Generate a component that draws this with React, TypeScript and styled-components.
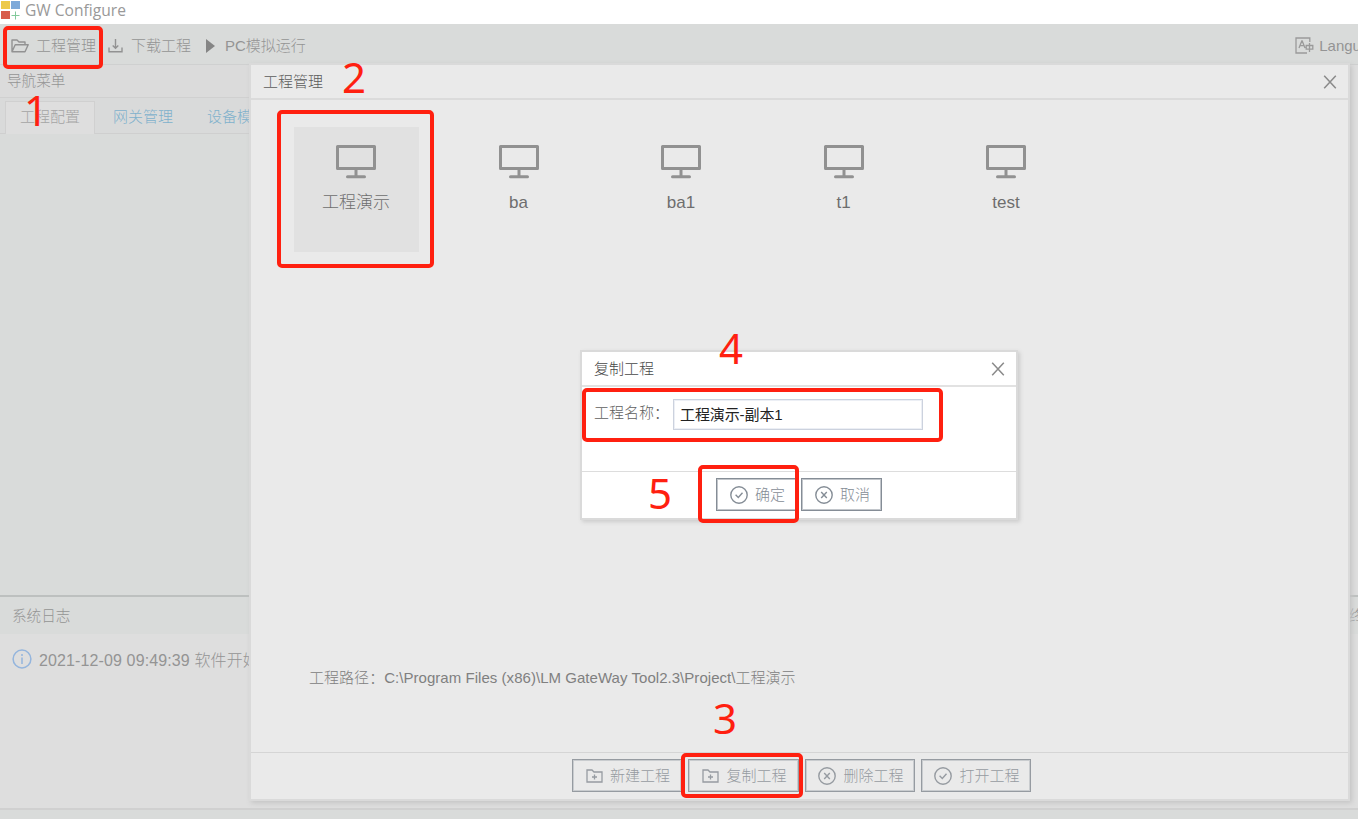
import React from 'react';
import styled, { createGlobalStyle } from 'styled-components';

const Global = createGlobalStyle`
  * { box-sizing: border-box; }
  body { margin: 0; overflow: hidden; background: #dedede; }
  body, button, input { font-family: "Liberation Sans", "Noto Sans CJK SC", sans-serif; font-weight: 300; }
`;

const Window = styled.div`
  position: relative;
  width: 1358px;
  height: 819px;
  overflow: hidden;
  display: flex;
  flex-direction: column;
  background: #dedede;
  font-size: 15px;
  line-height: 20px;
  color: #949494;
  white-space: nowrap;
`;

const TitleBar = styled.header`
  height: 24px;
  flex: none;
  display: flex;
  align-items: center;
  gap: 5px;
  padding: 0 0 4px 1px;
  background: #fff;
  color: #999;
  font: 400 15.6px/20px "Open Sans", sans-serif;
`;

const Toolbar = styled.nav`
  height: 41px;
  flex: none;
  display: flex;
  align-items: center;
  padding: 3px 0 0 11px;
  background: #d9dbda;
  border-bottom: 1px solid #cfd0d0;
`;

const ToolItem = styled.div<{ $gap: number; $after?: number }>`
  display: flex;
  align-items: center;
  gap: ${p => p.$gap}px;
  margin-right: ${p => p.$after ?? 0}px;
  svg { flex: none; }
`;

const Spacer = styled.div`flex: 1;`;

const Workspace = styled.main`
  height: 530px;
  flex: none;
  display: flex;
`;

const Sidebar = styled.aside`
  width: 300px;
  display: flex;
  flex-direction: column;
  background: #d9dbda;
`;

const SideHeading = styled.div`
  height: 33px;
  padding: 6px 7px;
  font-size: 14.6px;
  background: #dbdbdb;
  border-bottom: 1px solid #d0d0d0;
`;

const Tabs = styled.div`
  height: 36px;
  display: flex;
  padding: 3px 0 0 5px;
  background: #d9dada;
  border-bottom: 1px solid #cfcfcf;
`;

const Tab = styled.div<{ $active?: boolean }>`
  height: ${p => (p.$active ? 33 : 32)}px;
  padding: 5px ${p => (p.$active ? 14 : 15)}px 0 ${p => (p.$active ? 14 : 17)}px;
  color: ${p => (p.$active ? '#a5a5a5' : '#7fb1cc')};
  background: ${p => (p.$active ? '#dedede' : 'transparent')};
  border: 1px solid ${p => (p.$active ? '#d0d0d0' : 'transparent')};
  border-bottom: 0;
`;

const LogPanel = styled.section`
  height: 213px;
  flex: none;
  border-top: 2px solid #bdc0bf;
`;

const LogHeading = styled.div`
  height: 37px;
  display: flex;
  justify-content: space-between;
  padding: 9px 0 0 12px;
  font-size: 14.6px;
  background: #d9dbda;
`;

const SideLabel = styled.span`
  width: 9px;
  overflow: hidden;
`;

const LogLine = styled.div`
  display: flex;
  align-items: center;
  gap: 7px;
  padding: 13px 0 0 12px;
  font-size: 16px;
  letter-spacing: 0.12px;
  span { padding-top: 4px; }
`;

const StatusBar = styled.footer`
  height: 11px;
  border-top: 2px solid #d0d0d0;
  background: #d9dbda;
`;

const Dialog = styled.section`
  position: absolute;
  left: 249px;
  top: 63px;
  width: 1101px;
  height: 738px;
  display: flex;
  flex-direction: column;
  background: #eaeaea;
  border: 2px solid #dadada;
  box-shadow: 2px 2px 5px #c4c4c4;
`;

const DialogHeader = styled.header<{ $line: string; $ink: string }>`
  height: 35px;
  flex: none;
  display: flex;
  align-items: center;
  justify-content: space-between;
  padding: 0 11px 0 12px;
  color: ${p => p.$ink};
  border-bottom: 2px solid ${p => p.$line};
`;

const DialogBody = styled.div`
  flex: 1;
  display: flex;
  flex-direction: column;
  justify-content: space-between;
  padding: 27px 0 64px 43px;
`;

const Projects = styled.div`
  display: flex;
  gap: 37.5px;
`;

const Project = styled.div<{ $selected?: boolean }>`
  width: 125px;
  height: 125px;
  display: flex;
  flex-direction: column;
  align-items: center;
  gap: 14px;
  padding: 18px 1px 0 0;
  font-size: 17px;
  color: #6e6e6e;
  background: ${p => (p.$selected ? '#e1e1e1' : 'transparent')};
`;

const PathText = styled.div`
  padding-left: 15px;
  color: #808080;
  font-size: 15px;
  letter-spacing: 0.04px;
`;

const DialogFooter = styled.footer`
  height: 47px;
  display: flex;
  gap: 6px;
  padding: 6px 0 0 321px;
  border-top: 1px solid #d5d5d5;
`;

const ActionButton = styled.button<{ $width: number; $tone: string; $edge: string }>`
  width: ${p => p.$width}px;
  height: 33px;
  flex: none;
  display: flex;
  align-items: center;
  justify-content: center;
  gap: 7px;
  padding: 1px 0 0 2px;
  background: transparent;
  border: 1px solid ${p => p.$tone};
  box-shadow: inset 0 0 0 1px ${p => p.$edge};
  border-radius: 0;
  color: ${p => p.$tone};
  font-size: 15px;
  line-height: 20px;
  white-space: nowrap;
`;

const CopyDialog = styled.section`
  position: absolute;
  left: 580px;
  top: 350px;
  width: 438px;
  height: 170px;
  display: flex;
  flex-direction: column;
  background: #fff;
  border: 2px solid #dadada;
  box-shadow: 2px 2px 4px #ccc;
`;

const Field = styled.label`
  flex: 1;
  display: flex;
  align-items: flex-start;
  gap: 3px;
  padding: 12px 0 0 12px;
  color: #606060;
  span { width: 76px; padding-top: 4px; }
`;

const NameInput = styled.input`
  width: 250px;
  height: 31px;
  padding: 0 6px 3px;
  border: 1px solid #ccd2de;
  box-shadow: inset 0 0 0 1px #eceff5;
  outline: 0;
  font-size: 15px;
  letter-spacing: -0.1px;
  font-weight: 400;
  color: #222;
  background: #fff;
`;

const CopyFooter = styled.footer`
  height: 47px;
  display: flex;
  gap: 4px;
  padding: 6px 0 0 134px;
  border-top: 1px solid #ddd;
`;

const Highlight = styled.div<{ $x: number; $y: number; $w: number; $h: number }>`
  position: absolute;
  left: ${p => p.$x}px;
  top: ${p => p.$y}px;
  width: ${p => p.$w}px;
  height: ${p => p.$h}px;
  border: 4px solid #ff2010;
  border-radius: 5px;
  pointer-events: none;
`;

const Step = styled.div<{ $x: number; $y: number }>`
  position: absolute;
  left: ${p => p.$x}px;
  top: ${p => p.$y}px;
  color: #ff2010;
  font: 400 42px/42px "Noto Sans", sans-serif;
`;

const Logo = () => (
  <svg width="19" height="20" viewBox="0 0 19 20">
    <path fill="#edc94a" d="M0 1h9v8H0z" />
    <path fill="#7da9d9" d="M10 1h9v8h-9z" />
    <path fill="#d85c4b" d="M0 11h9v8H0z" />
    <path stroke="#82c99a" d="M10.5 15.5h8M14.5 11.5v8" />
  </svg>
);

const FolderOpen = () => (
  <svg width="18" height="14" viewBox="0 0 18 14" fill="none" stroke="#929292" strokeWidth="1.4" strokeLinejoin="round">
    <path d="M1 12.7V1h5l2 2h6v2.6M1 12.7 4.2 5.7h13L14 12.7z" />
  </svg>
);

const Download = () => (
  <svg width="15" height="15" viewBox="0 0 15 15" fill="none" stroke="#929292" strokeWidth="1.4">
    <path d="M1 9.5v4.3h13V9.5M7.5 1v9M4.7 7.5l2.8 2.8 2.8-2.8" />
  </svg>
);

const Play = () => (
  <svg width="9" height="14" viewBox="0 0 9 14"><path d="M0 0l9 7-9 7z" fill="#858585" /></svg>
);

const Language = () => (
  <svg width="19" height="17" viewBox="0 0 19 17" fill="none" stroke="#9a9a9a" strokeWidth="1.3">
    <path d="M14.8 5V1H1v15h11M4 11l2.8-7h.4L10 11M5 8.7h4M11.2 8.5h6.6v3.6h-6.6zM14.5 6v9" />
  </svg>
);

const Close = () => (
  <svg width="14" height="14" viewBox="0 0 14 14" fill="none" stroke="#8a8a8a" strokeWidth="1.5">
    <path d="M1.2.7l11.6 12.6M12.8.7L1.2 13.3" />
  </svg>
);

const Monitor = () => (
  <svg width="40" height="34" viewBox="0 0 40 34" fill="none" stroke="#919191" strokeWidth="3" strokeLinejoin="round" strokeLinecap="round">
    <path d="M1.5 1.5h37v22h-37zM20 24v7M11.5 31.8h17" />
  </svg>
);

const Info = () => (
  <svg width="20" height="20" viewBox="0 0 20 20" fill="none" stroke="#94b5dd" strokeWidth="1.5">
    <circle cx="10" cy="10" r="8.9" /><path d="M10 8.5V15M10 5v2" />
  </svg>
);

const FolderAdd = () => (
  <svg width="17" height="14" viewBox="0 0 17 14" fill="none" stroke="currentColor" strokeWidth="1.3">
    <path d="M1 1h5l2 2h8v10H1zM6 8h5M8.5 5.5v5" />
  </svg>
);

const Circled = ({ cross }: { cross?: boolean }) => (
  <svg width="18" height="18" viewBox="0 0 18 18" fill="none" stroke="currentColor" strokeWidth="1.4">
    <circle cx="9" cy="9" r="8.2" />
    <path d={cross ? 'M6.2 6l5.6 6M11.8 6l-5.6 6' : 'M5.6 8.8l2.7 2.7 4.2-4.8'} />
  </svg>
);

const projects = ['工程演示', 'ba', 'ba1', 't1', 'test'];
const muted = { $tone: '#969ba1', $edge: '#c9cccf' };
const strong = { $tone: '#858d96', $edge: '#c2c6cb' };

export default function App() {
  return (
    <Window>
      <Global />
      <TitleBar><Logo />GW Configure</TitleBar>
      <Toolbar>
        <ToolItem $gap={7} $after={12}><FolderOpen />工程管理</ToolItem>
        <ToolItem $gap={8} $after={15}><Download />下载工程</ToolItem>
        <ToolItem $gap={10}><Play />PC模拟运行</ToolItem>
        <Spacer />
        <ToolItem $gap={5} $after={-28}><Language />Language</ToolItem>
      </Toolbar>
      <Workspace>
        <Sidebar>
          <SideHeading>导航菜单</SideHeading>
          <Tabs>
            <Tab $active>工程配置</Tab>
            <Tab>网关管理</Tab>
            <Tab>设备模</Tab>
          </Tabs>
        </Sidebar>
      </Workspace>
      <LogPanel>
        <LogHeading><span>系统日志</span><SideLabel>终</SideLabel></LogHeading>
        <LogLine><Info /><span>2021-12-09 09:49:39 软件开始</span></LogLine>
      </LogPanel>
      <StatusBar />

      <Dialog>
        <DialogHeader $line="#dbdbdb" $ink="#5c5c5c">工程管理<Close /></DialogHeader>
        <DialogBody>
          <Projects>
            {projects.map((name, i) => (
              <Project key={name} $selected={i === 0}><Monitor />{name}</Project>
            ))}
          </Projects>
          <PathText>工程路径：C:\Program Files (x86)\LM GateWay Tool2.3\Project\工程演示</PathText>
        </DialogBody>
        <DialogFooter>
          <ActionButton $width={110} {...muted}><FolderAdd />新建工程</ActionButton>
          <ActionButton $width={111} {...muted}><FolderAdd />复制工程</ActionButton>
          <ActionButton $width={110} {...muted}><Circled cross />删除工程</ActionButton>
          <ActionButton $width={110} {...muted}><Circled />打开工程</ActionButton>
        </DialogFooter>
      </Dialog>

      <CopyDialog>
        <DialogHeader $line="#e2e2e2" $ink="#484848">复制工程<Close /></DialogHeader>
        <Field><span>工程名称：</span><NameInput defaultValue="工程演示-副本1" /></Field>
        <CopyFooter>
          <ActionButton $width={81} {...strong}><Circled />确定</ActionButton>
          <ActionButton $width={81} {...strong}><Circled cross />取消</ActionButton>
        </CopyFooter>
      </CopyDialog>

      <Highlight $x={3} $y={26} $w={100} $h={43} />
      <Highlight $x={277} $y={110} $w={157} $h={158} />
      <Highlight $x={681} $y={753} $w={122} $h={45} />
      <Highlight $x={582} $y={388} $w={361} $h={54} />
      <Highlight $x={698} $y={465} $w={101} $h={58} />
      <Step $x={24} $y={89}>1</Step>
      <Step $x={342} $y={56}>2</Step>
      <Step $x={713} $y={697}>3</Step>
      <Step $x={719} $y={327}>4</Step>
      <Step $x={648} $y={472}>5</Step>
    </Window>
  );
}
